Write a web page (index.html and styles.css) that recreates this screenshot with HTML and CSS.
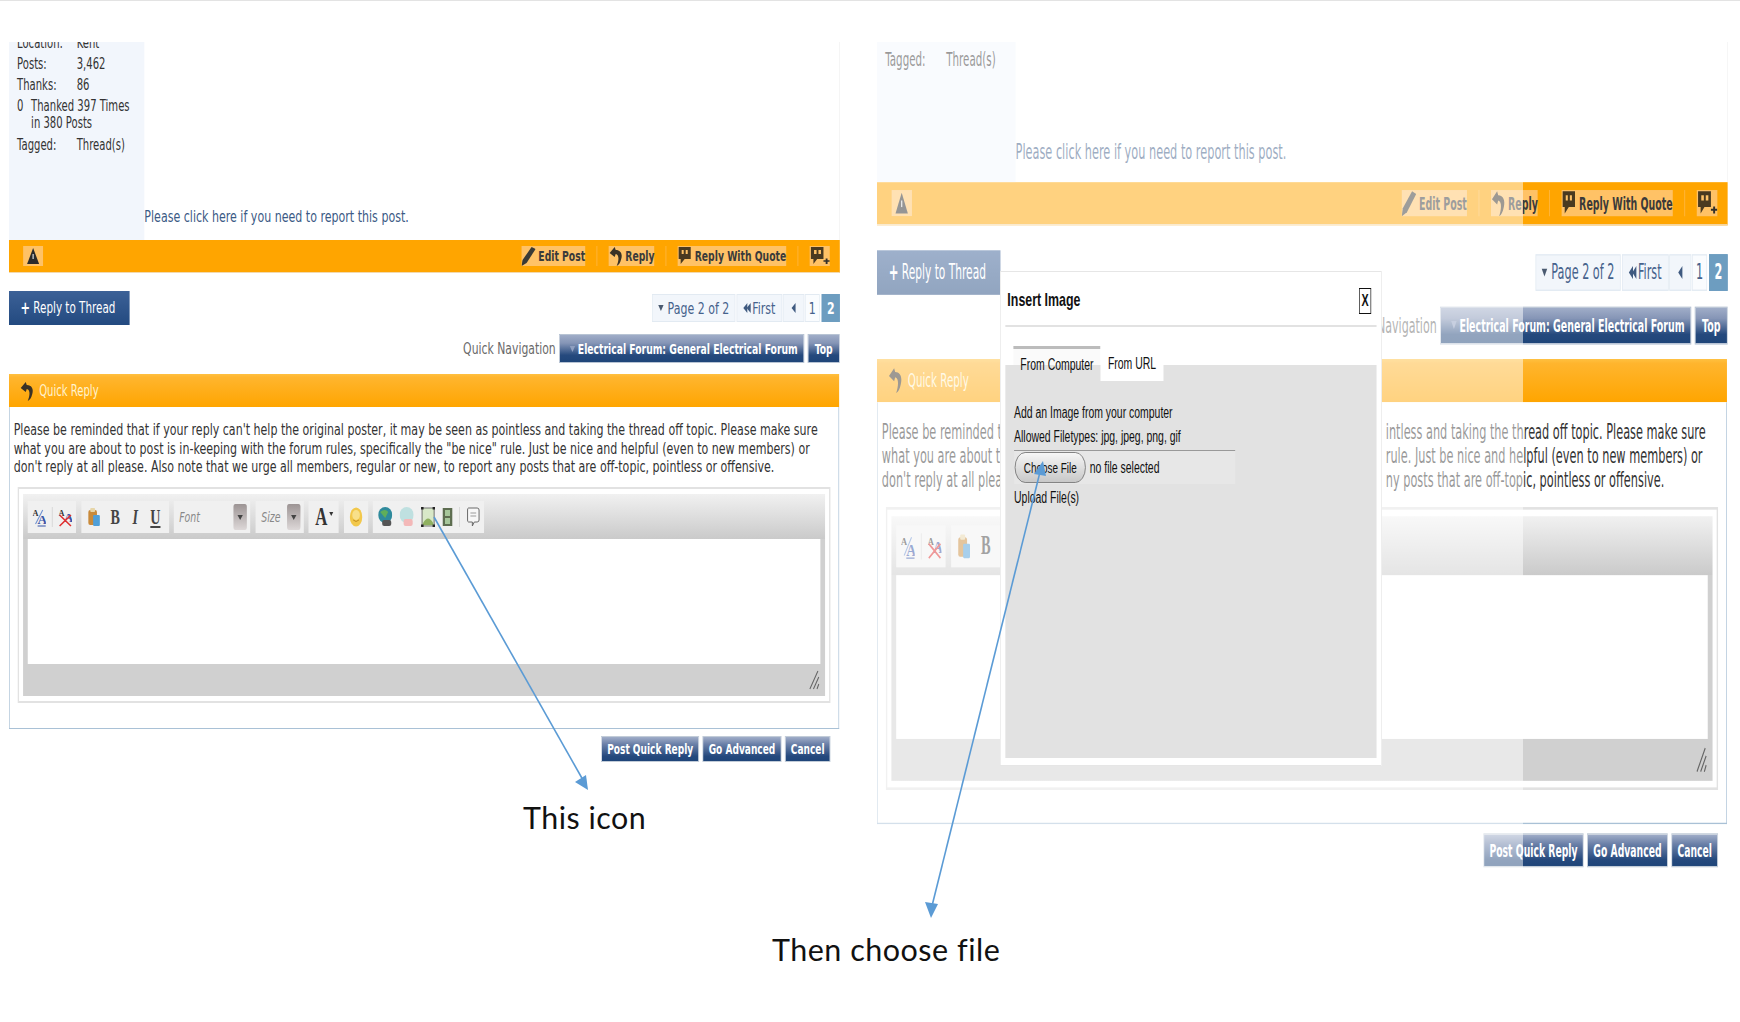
FILE: index.html
```html
<!DOCTYPE html>
<html lang="en">
<head>
<meta charset="utf-8">
<title>Insert image instructions</title>
<link rel="stylesheet" href="styles.css">
</head>
<body>
<svg class="sprite" aria-hidden="true"><defs>
<g id="warn"><rect width="20" height="20" fill="#ffc266"/><path d="M10 2 16 18H4Z" fill="#2b2b2b"/><rect x="9.400" y="8" width="1.200" height="5" fill="#ddd"/></g>
<g id="pencil"><path d="M0 20 1 14 10 1 14 3 5 17Z" fill="#3a3a36"/></g>
<g id="back"><path d="M1 7 6 1 7 4C12 4 14 8 12.500 13 11.500 17 10 19 8 20 10 15 11 9 7 8L6 11Z" fill="#3a3226"/></g>
<g id="quote"><path d="M1 1H13V13H7L3 18V13H1Z" fill="#4a3a20"/><rect x="4" y="4" width="2" height="4" fill="#ffc266"/><rect x="8" y="4" width="2" height="4" fill="#ffc266"/></g>
<g id="quoteplus"><path d="M1 1H11V13H6L3 18V13H1Z" fill="#4a3a20"/><rect x="3.500" y="4" width="2" height="4" fill="#ffc266"/><rect x="7" y="4" width="2" height="4" fill="#ffc266"/><path d="M11 15H16M13.500 12.500V18" stroke="#33302a" stroke-width="1.500"/></g>
<g id="paste"><rect x="1" y="3" width="9" height="15" rx="2" fill="#c98a3a"/><rect x="3" y="1" width="5" height="4" rx="1" fill="#e6d5a8"/><rect x="6" y="8" width="7" height="11" rx="1" fill="#4f9fd8"/></g>
<g id="smile"><ellipse cx="7" cy="10" rx="6.500" ry="9.500" fill="#f2c84b"/><ellipse cx="7" cy="8" rx="4" ry="5" fill="#f8e08a"/><path d="M4 13Q7 16 10 13" stroke="#c08a20" fill="none"/></g>
<g id="globe"><ellipse cx="7" cy="8" rx="7" ry="8" fill="#2f8a9c"/><path d="M2 5Q7 1 10 5L7 11Z" fill="#5fae5a"/><rect x="4" y="13" width="9" height="6" rx="2" fill="#555"/></g>
<g id="globelight"><ellipse cx="7" cy="8" rx="7" ry="8" fill="#bfe0e0"/><rect x="4" y="12" width="9" height="7" rx="2" fill="#f3b8b8"/></g>
<g id="picture"><rect x="1" y="1" width="12" height="18" fill="#d8e8c8" stroke="#555" stroke-width=".8"/><path d="M2 16Q7 7 12 16V18H2Z" fill="#8fb060"/><rect x="0" y="0" width="2.500" height="2.500" fill="#222"/><rect x="11.500" y="0" width="2.500" height="2.500" fill="#222"/><rect x="0" y="17.500" width="2.500" height="2.500" fill="#222"/><rect x="11.500" y="17.500" width="2.500" height="2.500" fill="#222"/></g>
<g id="film"><rect x="0" y="1" width="10" height="18" fill="#5d6d50"/><rect x="2.500" y="3" width="5" height="6" fill="#a6c69a"/><rect x="2.500" y="11" width="5" height="6" fill="#a6c69a"/></g>
<g id="bubble"><path d="M2 1H11Q13 1 13 3V13Q13 15 11 15H8L6 19V15H2Q1 15 1 13V3Q1 1 2 1Z" fill="#f7f7f7" stroke="#666"/><path d="M4 6H10M4 9H10" stroke="#999"/></g>
<g id="grip"><path d="M1 19 10 1M5 19 11 7M9 19 11 14" stroke="#666" stroke-width="1.200"/></g>
</defs></svg>

<main class="slide">
  <div class="topline"></div>

  <section class="shot shot-left">
    <div class="crop crop-left">
      <div class="post">
        <div class="userinfo">
          <div class="info-row"><span class="info-key">Location:</span><span>Kent</span></div>
          <div class="info-row"><span class="info-key">Posts:</span><span>3,462</span></div>
          <div class="info-row"><span class="info-key">Thanks:</span><span>86</span></div>
          <div class="info-thanked"><span class="zero">0</span><span>Thanked 397 Times<br>in 380 Posts</span></div>
          <div class="info-row"><span class="info-key">Tagged:</span><span>Thread(s)</span></div>
        </div>
        <div class="report">Please click here if you need to report this post.</div>
      </div>
    </div>
    <div class="actionbar">
      <svg class="ic warn" viewBox="0 0 20 20" preserveAspectRatio="none"><use href="#warn"/></svg>
      <div class="actions">
        <span class="act"><svg class="ic i14" viewBox="0 0 14 20" preserveAspectRatio="none"><use href="#pencil"/></svg>Edit Post</span><i class="sep"></i>
        <span class="act"><svg class="ic i14" viewBox="0 0 14 20" preserveAspectRatio="none"><use href="#back"/></svg>Reply</span><i class="sep"></i>
        <span class="act"><svg class="ic i14" viewBox="0 0 14 20" preserveAspectRatio="none"><use href="#quote"/></svg>Reply With Quote</span><i class="sep"></i>
        <span class="act act-last"><svg class="ic i16" viewBox="0 0 16 20" preserveAspectRatio="none"><use href="#quoteplus"/></svg></span>
      </div>
    </div>
    <div class="threadrow">
      <span class="replybtn"><b>+</b> Reply to Thread</span>
      <div class="pager">
        <span class="pg pg-main"><i class="tri"></i>Page 2 of 2</span>
        <span class="pg pg-first"><i class="tl"></i><i class="tl tl-b"></i>First</span>
        <span class="pg pg-prev"><i class="tl"></i></span>
        <span class="pg pg-one">1</span>
        <span class="pg pg-cur">2</span>
      </div>
    </div>
    <div class="navrow">
      <span class="navlabel">Quick Navigation</span>
      <span class="navbtn navsel"><i class="tri tri-pale"></i>Electrical Forum: General Electrical Forum</span>
      <span class="navbtn navtop">Top</span>
    </div>
    <div class="qr-head"><svg class="ic i14" viewBox="0 0 14 20" preserveAspectRatio="none"><use href="#back"/></svg>Quick Reply</div>
    <div class="qr-body">
      <p class="notice">Please be reminded that if your reply can't help the original poster, it may be seen as pointless and taking the thread off topic. Please make sure<br>what you are about to post is in-keeping with the forum rules, specifically the "be nice" rule. Just be nice and helpful (even to new members) or<br>don't reply at all please. Also note that we urge all members, regular or new, to report any posts that are off-topic, pointless or offensive.</p>
      <div class="editor">
        <div class="editor-in">
        <div class="toolbar">
          <div class="tg tg1">
            <svg class="ic i13" viewBox="0 0 13 20" preserveAspectRatio="none"><text x="0" y="9" class="ta">A</text><path d="M3 17 10 3" stroke="#6a8fd0"/><text x="5" y="17" class="tb">A</text><path d="M5 19H13" stroke="#3555a8"/></svg><i class="tsep"></i>
            <svg class="ic i13" viewBox="0 0 13 20" preserveAspectRatio="none"><text x="0" y="9" class="ta">A</text><text x="5" y="15" class="tb">A</text><path d="M1 19 12 8M1 8 12 19" stroke="#e03030" stroke-width="1.500"/></svg>
          </div>
          <div class="tg tg2">
            <svg class="ic i13" viewBox="0 0 14 20" preserveAspectRatio="none"><use href="#paste"/></svg>
            <span class="fmt fb">B</span><span class="fmt fi">I</span><span class="fmt fu">U</span>
          </div>
          <div class="tg tg-font"><em>Font</em><span class="dd"><i class="ddtri"></i></span></div>
          <div class="tg tg-size"><em>Size</em><span class="dd"><i class="ddtri"></i></span></div>
          <div class="tg tg-col"><span class="bigA">A</span><i class="ddtri ddtri-dark"></i></div>
          <div class="tg tg-smile"><svg class="ic i13" viewBox="0 0 14 20" preserveAspectRatio="none"><use href="#smile"/></svg></div>
          <div class="tg tg-media">
            <svg class="ic i14" viewBox="0 0 14 20" preserveAspectRatio="none"><use href="#globe"/></svg>
            <svg class="ic i14" viewBox="0 0 14 20" preserveAspectRatio="none"><use href="#globelight"/></svg>
            <svg class="ic i14" viewBox="0 0 14 20" preserveAspectRatio="none"><use href="#picture"/></svg>
            <svg class="ic i10" viewBox="0 0 10 20" preserveAspectRatio="none"><use href="#film"/></svg><i class="tsep"></i>
            <svg class="ic i13" viewBox="0 0 14 20" preserveAspectRatio="none"><use href="#bubble"/></svg>
          </div>
        </div>
        <div class="textarea"></div>
        <div class="statusbar"><svg class="ic grip" viewBox="0 0 12 20" preserveAspectRatio="none"><use href="#grip"/></svg></div>
        </div>
      </div>
    </div>
    <div class="submitrow">
      <span class="subbtn sb-post">Post Quick Reply</span>
      <span class="subbtn sb-adv">Go Advanced</span>
      <span class="subbtn sb-can">Cancel</span>
    </div>
  </section>

  <section class="shot shot-right">
    <div class="crop crop-right">
      <div class="post">
        <div class="userinfo">
          <div class="info-row"><span class="info-key">Tagged:</span><span>Thread(s)</span></div>
        </div>
        <div class="report">Please click here if you need to report this post.</div>
      </div>
    </div>
    <div class="actionbar">
      <svg class="ic warn" viewBox="0 0 20 20" preserveAspectRatio="none"><use href="#warn"/></svg>
      <div class="actions">
        <span class="act"><svg class="ic i14" viewBox="0 0 14 20" preserveAspectRatio="none"><use href="#pencil"/></svg>Edit Post</span><i class="sep"></i>
        <span class="act"><svg class="ic i14" viewBox="0 0 14 20" preserveAspectRatio="none"><use href="#back"/></svg>Reply</span><i class="sep"></i>
        <span class="act"><svg class="ic i14" viewBox="0 0 14 20" preserveAspectRatio="none"><use href="#quote"/></svg>Reply With Quote</span><i class="sep"></i>
        <span class="act act-last"><svg class="ic i16" viewBox="0 0 16 20" preserveAspectRatio="none"><use href="#quoteplus"/></svg></span>
      </div>
    </div>
    <div class="threadrow">
      <span class="replybtn"><b>+</b> Reply to Thread</span>
      <div class="pager">
        <span class="pg pg-main"><i class="tri"></i>Page 2 of 2</span>
        <span class="pg pg-first"><i class="tl"></i><i class="tl tl-b"></i>First</span>
        <span class="pg pg-prev"><i class="tl"></i></span>
        <span class="pg pg-one">1</span>
        <span class="pg pg-cur">2</span>
      </div>
    </div>
    <div class="navrow">
      <span class="navlabel nav-hidden">Navigation</span>
      <span class="navbtn navsel"><i class="tri tri-pale"></i>Electrical Forum: General Electrical Forum</span>
      <span class="navbtn navtop">Top</span>
    </div>
    <div class="qr-head"><svg class="ic i14" viewBox="0 0 14 20" preserveAspectRatio="none"><use href="#back"/></svg>Quick Reply</div>
    <div class="qr-body">
      <div class="notice notice-split">
        <p class="n-l">Please be reminded t<br>what you are about t<br>don't reply at all plea</p>
        <p class="n-r">intless and taking the thread off topic. Please make sure<br>rule. Just be nice and helpful (even to new members) or<br>ny posts that are off-topic, pointless or offensive.</p>
      </div>
      <div class="editor">
        <div class="editor-in">
        <div class="toolbar">
          <div class="tg tg1">
            <svg class="ic i13" viewBox="0 0 13 20" preserveAspectRatio="none"><text x="0" y="9" class="ta">A</text><path d="M3 17 10 3" stroke="#6a8fd0"/><text x="5" y="17" class="tb">A</text><path d="M5 19H13" stroke="#3555a8"/></svg><i class="tsep"></i>
            <svg class="ic i13" viewBox="0 0 13 20" preserveAspectRatio="none"><text x="0" y="9" class="ta">A</text><text x="5" y="15" class="tb">A</text><path d="M1 19 12 8M1 8 12 19" stroke="#e03030" stroke-width="1.500"/></svg>
          </div>
          <div class="tg tg2">
            <svg class="ic i13" viewBox="0 0 14 20" preserveAspectRatio="none"><use href="#paste"/></svg>
            <span class="fmt fb">B</span>
          </div>
        </div>
        <div class="textarea"></div>
        <div class="statusbar"><svg class="ic grip" viewBox="0 0 12 20" preserveAspectRatio="none"><use href="#grip"/></svg></div>
        </div>
      </div>
    </div>
    <div class="submitrow">
      <span class="subbtn sb-post">Post Quick Reply</span>
      <span class="subbtn sb-adv">Go Advanced</span>
      <span class="subbtn sb-can">Cancel</span>
    </div>
  </section>

  <div class="fade"></div>

  <section class="dialog">
    <header class="dlg-head"><h2>Insert Image</h2><span class="dlg-x">X</span></header>
    <div class="tabs"><span class="tab tab-on">From Computer</span><span class="tab tab-off">From URL</span></div>
    <div class="dlg-panel">
      <p class="dlg-line">Add an Image from your computer</p>
      <p class="dlg-line">Allowed Filetypes: jpg, jpeg, png, gif</p>
      <div class="fileinput"><span class="choose">Choose File</span><span>no file selected</span></div>
      <p class="dlg-line">Upload File(s)</p>
    </div>
  </section>

  <svg class="arrows" viewBox="0 0 1740 1022" aria-hidden="true">
    <path d="M434 517 583 780" stroke="#5b9bd5" stroke-width="1.600" fill="none"/>
    <path d="M588 790 575 782 586 775Z" fill="#5b9bd5"/>
    <path d="M1040 472 932 906" stroke="#5b9bd5" stroke-width="1.600" fill="none"/>
    <path d="M1043 461 1046 476 1034 474Z" fill="#5b9bd5"/>
    <path d="M931 918 925 902 938 904Z" fill="#5b9bd5"/>
  </svg>

  <div class="caption cap-one">This icon</div>
  <div class="caption cap-two">Then choose file</div>
</main>
</body>
</html>
```
FILE: styles.css
```css
* { box-sizing: border-box; }
html, body { margin: 0; padding: 0; background: #fff; }
.sprite { position: absolute; width: 0; height: 0; }
.slide { position: relative; width: 1740px; height: 1022px; overflow: hidden; background: #fff; font-family: "DejaVu Sans", sans-serif; }
.topline { height: 1px; background: #e3e3e3; }

/* the two pasted pictures: same page, stretched differently */
.shot { position: absolute; top: 42px; width: 1240px; transform-origin: 0 0; font-size: 15px; color: #333; }
.shot-left { left: 9px; transform: scale(.67, 1); }
.shot-right { left: 877px; transform: scale(.686, 1.31); }
.ic { display: block; flex: none; height: 20px; }
.i10 { width: 15px; }
.i13 { width: 20px; }
.i14 { width: 21px; }
.i16 { width: 30px; }

.crop { display: flex; flex-direction: column; justify-content: flex-end; overflow: hidden; border-right: 1px solid #f1f1f1; }
.crop-left { height: 197.500px; }
.crop-right { height: 107px; }
.post { flex: none; display: flex; height: 340px; }
.userinfo { flex: none; width: 202px; background: #f2f6fc; padding: 133px 0 0 12px; line-height: 21px; }
.crop-right .userinfo { padding-top: 235.500px; }
.info-row { display: flex; height: 21px; }
.info-key { width: 89px; }
.info-thanked { display: flex; line-height: 17.500px; padding: 2px 0; height: 39px; }
.zero { width: 21px; }
.report { align-self: flex-end; margin-bottom: 13px; color: #3b5a85; line-height: 20px; font-size: 16.500px; white-space: nowrap; }

.actionbar { display: flex; align-items: center; justify-content: space-between; height: 33px; padding: 0 15px 0 21px; background: #ffa500; border-bottom: 1px solid #f2d9ae; }
.warn { width: 30px; height: 20px; }
.actions { display: flex; align-items: center; }
.act { display: flex; align-items: center; gap: 4px; height: 20px; background: #ffc266; font-size: 13.800px; font-weight: 700; color: #3a3a3a; white-space: nowrap; }
.act-last { gap: 0; }
.sep { width: 1px; height: 20px; margin: 0 17px; background: #ffbc52; }

.threadrow { display: flex; justify-content: space-between; align-items: center; height: 34px; margin-top: 18.500px; }
.replybtn { display: flex; align-items: center; gap: 5px; height: 34px; width: 180px; padding-left: 17px; background: linear-gradient(#3c6197, #234a80); color: #fff; font-size: 15.500px; white-space: nowrap; }
.replybtn b { font-size: 17px; }
.pager { display: flex; align-items: stretch; height: 28px; font-size: 16.400px; color: #46628c; }
.pg { display: flex; align-items: center; justify-content: center; background: #f2f6fb; border: 1px solid #e2eaf2; }
.pg-main { width: 124px; gap: 6px; margin-right: 2px; white-space: nowrap; }
.pg-first { width: 68px; margin-right: 1px; font-size: 16.400px; white-space: nowrap; }
.pg-prev { width: 32px; margin-right: 1px; }
.pg-one { width: 22px; background: #fafcfe; margin-right: 3px; }
.pg-cur { width: 27px; background: #6d9dc0; color: #fff; font-weight: 700; border-color: #6d9dc0; }
.tri { width: 0; height: 0; border: 4px solid transparent; border-top: 6px solid #4a5a70; border-bottom: 0; }
.tri-pale { border-top-color: #8f9fc0; margin-right: 4px; }
.tl { flex: none; width: 0; height: 0; border: 5px solid transparent; border-right: 6px solid #3f5a80; border-left: 0; }
.tl-b { margin: 0 2px 0 -1px; }

.navrow { display: flex; justify-content: flex-end; align-items: center; height: 29px; margin-top: 9px; gap: 5px; }
.navlabel { font-size: 16.200px; color: #6a6a6a; white-space: nowrap; }
.navbtn { display: flex; align-items: center; height: 29px; background: linear-gradient(#a0adc8 0, #8595b6 30%, #25497d 75%, #1f4579); border: 1px solid #b8c4d4; color: #fff; font-size: 13.800px; font-weight: 700; white-space: nowrap; }
.navsel { width: 366px; padding-left: 15px; }
.navtop { width: 48px; justify-content: center; }

.qr-head { display: flex; align-items: center; gap: 8px; height: 33px; margin-top: 11px; padding-left: 16px; background: linear-gradient(#ffc040, #ffb52e 10%, #ffa500); color: #fff3cf; font-size: 15px; margin-right: 1px; }
.qr-body { height: 322px; margin-right: 1px; padding: 14px 12px 0; background: #fff; border: 1px solid #a9c1d6; border-top: 0; }
.notice { margin: 0 0 10px -6px; font-size: 16.500px; line-height: 18.700px; color: #333; white-space: nowrap; }
.notice-split { display: flex; justify-content: space-between; height: 56px; }
.notice-split p { margin: 0; }
.notice-split .n-r { margin-right: 18px; }
.editor { height: 216px; padding: 5px 6px 5px 5.500px; border: 2px solid #e2e2e2; }
.editor-in { display: flex; flex-direction: column; height: 100%; background: linear-gradient(#f1f1f1, #cacaca 45px, #d0d0d0 45px); }
.toolbar { display: flex; gap: 7.500px; flex: none; height: 45px; padding: 7px 7.500px 6px; }
.tg { display: flex; align-items: center; height: 32px; background: #f0f0f0; color: #333; font-family: "Liberation Serif", serif; }
.tg1 { width: 72px; padding-left: 7px; }
.tsep { width: 1px; height: 20px; background: #cfcfcf; flex: none; }
.tg1 .tsep { margin: 0 9px; }
.tg2 { width: 131px; padding-left: 9px; gap: 14px; }
.ta { font: 700 8px "Liberation Serif", serif; fill: #333; }
.tb { font: 700 13px "Liberation Serif", serif; fill: #3555a8; }
.fmt { width: 16px; text-align: center; font-size: 21px; font-weight: 700; color: #444; }
.fi { font-style: italic; }
.fu { text-decoration: underline; }
.tg em { font-family: "DejaVu Sans", sans-serif; font-size: 14px; color: #888; }
.tg-font { width: 114px; padding: 0 5px 0 8px; justify-content: space-between; }
.tg-size { width: 72px; padding: 0 5px 0 9px; justify-content: space-between; }
.dd { display: flex; align-items: center; justify-content: center; width: 20px; height: 26px; border-radius: 3px; background: linear-gradient(#9c9494, #ddd8d8); }
.ddtri { display: block; width: 0; height: 0; border: 4px solid transparent; border-top: 5px solid #444; border-bottom: 0; }
.ddtri-dark { border-width: 3px 3px 0; border-top: 4px solid #333; margin: -6px 0 0 3px; }
.tg-col { width: 45px; padding-left: 10px; }
.bigA { font-size: 25px; font-weight: 700; color: #333; }
.tg-smile { width: 36px; justify-content: center; }
.tg-media { width: 166px; padding-left: 8px; gap: 11px; }
.tg-media .tsep { margin: 0 -1px; }
.textarea { flex: none; height: 125px; margin: 0 7.500px; background: #fff; }
.statusbar { display: flex; align-items: flex-end; justify-content: flex-end; flex: 1; padding: 0 8px 6px 0; }
.grip { width: 16px; height: 20px; }
.submitrow { display: flex; justify-content: flex-end; gap: 5px; margin-top: 7px; padding-right: 14px; }
.subbtn { display: flex; align-items: center; justify-content: center; height: 26px; background: linear-gradient(#a0adc8 0, #6b80a8 30%, #25497d 80%, #1f4579); border: 1px solid #c2ccd8; color: #fff; font-size: 13.500px; font-weight: 700; white-space: nowrap; }
.sb-post { width: 146px; }
.sb-adv { width: 118px; }
.sb-can { width: 68px; }

.fade { position: absolute; left: 870px; top: 42px; width: 653px; height: 832px; background: rgba(255,255,255,.5); }

.dialog { position: absolute; left: 1000px; top: 271px; width: 570px; height: 495px; padding: 0 7px; transform: scaleX(.67); transform-origin: 0 0; background: #fff; border: 1px solid #e6e6e6; font-family: "Liberation Sans", sans-serif; font-size: 15.600px; color: #111; }
.dlg-head { display: flex; justify-content: space-between; align-items: center; height: 55px; padding: 3px 8px 0 3px; border-bottom: 2px solid #e2e2e2; }
.dlg-head h2 { margin: 0; font-size: 18.500px; font-weight: 700; color: #111; }
.dlg-x { display: flex; align-items: center; justify-content: center; width: 18px; height: 26px; margin-top: 2px; border: 1.500px solid #111; font-weight: 700; font-size: 16px; }
.tabs { display: flex; height: 35px; margin: 19px 0 -16px 12px; position: relative; }
.tab { display: flex; align-items: center; justify-content: center; height: 35px; white-space: nowrap; }
.tab-on { width: 130px; border-top: 3px solid #bcbcbc; background: linear-gradient(#fafafa 16px, #e2e2e2 16px); }
.tab-off { width: 94px; background: #fff; }
.dlg-panel { height: 393px; padding: 36px 0 0 13px; background: #e2e2e2; }
.dlg-line { margin: 0; height: 24px; line-height: 24px; white-space: nowrap; }
.fileinput { display: flex; align-items: center; gap: 6px; width: 330px; height: 34px; margin: 1px 0 2px; padding-left: 1px; background: #e7e7e7; border-top: 1px solid #999; white-space: nowrap; }
.choose { display: flex; align-items: center; justify-content: center; width: 106px; height: 31px; border: 1px solid #707070; border-radius: 16px; background: linear-gradient(#f6f6f6, #c8c8c8); font-size: 14.800px; }

.arrows { position: absolute; left: 0; top: 0; width: 1740px; height: 1022px; pointer-events: none; }
.caption { position: absolute; font-family: Lato, sans-serif; color: #111; white-space: nowrap; line-height: 40px; }
.cap-one { left: 523px; top: 797px; font-size: 30.400px; letter-spacing: .5px; }
.cap-two { left: 772px; top: 929px; font-size: 30.500px; letter-spacing: .5px; }
```
